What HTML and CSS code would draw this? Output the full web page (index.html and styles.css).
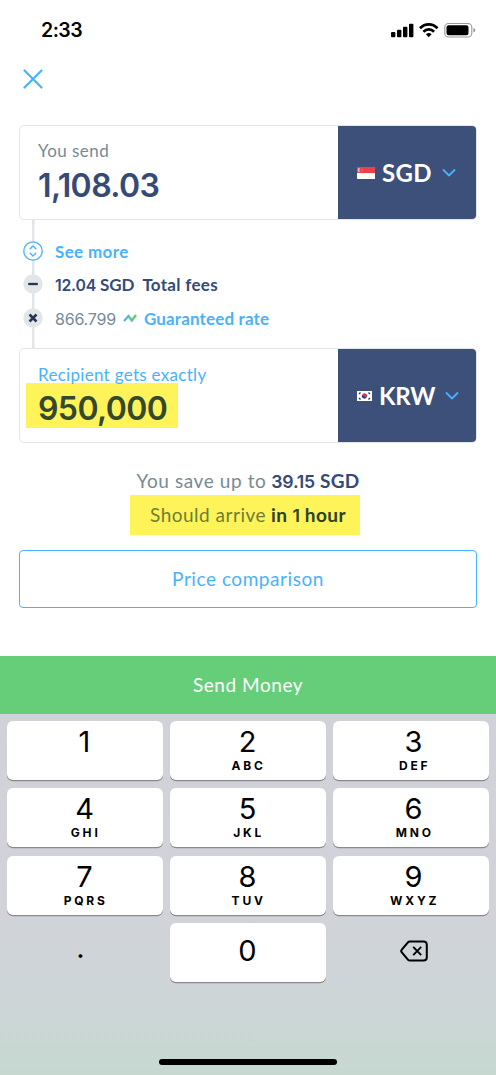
FILE: index.html
```html
<!DOCTYPE html>
<html lang="en">
<head>
<meta charset="utf-8">
<title>Send money</title>
<link rel="stylesheet" href="styles.css">
</head>
<body>
<main class="screen">
  <header class="status">
    <span class="time">2:33</span>
    <svg class="status-icons" width="86" height="18" viewBox="0 0 86 18">
      <rect x="1" y="10" width="4.4" height="5.2" rx="1"/>
      <rect x="7" y="7.7" width="4.4" height="7.5" rx="1"/>
      <rect x="13" y="4.7" width="4.4" height="10.5" rx="1"/>
      <rect x="19" y="1.7" width="4.4" height="13.5" rx="1"/>
      <g fill="none" stroke="#000" stroke-width="2.7">
        <path d="M30 6.2C35 1 42.500 1 47.500 6.200"/>
        <path d="M33.400 9.700C36.500 6.700 41 6.700 44.100 9.700"/>
      </g>
      <path d="M35.900 12.200Q38.750 9.900 41.600 12.200L38.750 15.200Z"/>
      <rect x="54.800" y="1.500" width="27" height="13.500" rx="3.800" fill="none" stroke="#999" stroke-width="1.100"/>
      <rect x="56.500" y="3.200" width="22" height="10.100" rx="2.200"/>
      <path d="M83.500 6v4.600q1.600-.6 1.600-2.300T83.500 6z" fill="#888"/>
    </svg>
  </header>
  <nav class="nav">
    <svg width="20" height="20" viewBox="0 0 20 20"><path d="M1.500 1.500l17 17M18.500 1.500l-17 17" fill="none" stroke="#48b3fb" stroke-width="2.200" stroke-linecap="round"/></svg>
  </nav>

  <section class="card">
    <div class="field">
      <div class="label send-label">You send</div>
      <div class="amount">1,108.03</div>
    </div>
    <div class="currency">
      <svg width="18" height="12" viewBox="0 0 18 12"><path fill="#fff" d="M0 0h18v12H0z"/><path fill="#ef4048" d="M0 0h18v6H0z"/><path d="M3.500 1.200a2 2 0 1 0 0 3.600a1.900 1.900 0 0 1 0-3.600z" fill="#ffb9bb"/><path d="M4.500 2h1v1h-1zm0 1.600h1v1h-1z" fill="#f79094"/></svg>
      <span class="code sgd">SGD</span>
      <svg width="14" height="9" viewBox="0 0 14 9"><path d="M1 1.500l6 6 6-6" fill="none" stroke="#48b3fb" stroke-width="1.800"/></svg>
    </div>
  </section>

  <section class="steps">
    <div class="step">
      <svg class="dot" width="20" height="20" viewBox="0 0 20 20"><circle cx="10" cy="10" r="9.200" fill="#fff" stroke="#48b3fb" stroke-width="1.300"/><path d="M6.700 8.200L10 5l3.300 3.200M6.700 11.800L10 15l3.300-3.200" fill="none" stroke="#48b3fb" stroke-width="1.300"/></svg>
      <span class="strong link more">See more</span>
    </div>
    <div class="step">
      <svg class="dot" width="20" height="20" viewBox="0 0 20 20"><circle cx="10" cy="10" r="9.700" fill="#e2e6e8"/><path d="M5.200 10h9.600" stroke="#253655" stroke-width="2.300"/></svg>
      <span class="strong navy fee"><span class="num">12.04</span> SGD</span>
      <span class="strong navy fees">Total fees</span>
    </div>
    <div class="step">
      <svg class="dot" width="20" height="20" viewBox="0 0 20 20"><circle cx="10" cy="10" r="9.700" fill="#e2e6e8"/><path d="M6.500 6.500l7 7M13.500 6.500l-7 7" stroke="#253655" stroke-width="2.500"/></svg>
      <span class="rate">866.799</span>
      <svg class="trend" width="14" height="10" viewBox="0 0 14 10"><defs><linearGradient id="g"><stop stop-color="#48b3fb"/><stop offset=".7" stop-color="#5bcd78"/></linearGradient></defs><path d="M1 8l4.500-5 3.300 4.500L13 2" fill="none" stroke="url(#g)" stroke-width="2.300"/></svg>
      <span class="strong link guaranteed">Guaranteed rate</span>
    </div>
  </section>

  <section class="card">
    <div class="field">
      <div class="label recipient">Recipient gets exactly</div>
      <div class="amount marked">950,000</div>
    </div>
    <div class="currency">
      <svg width="15" height="10" viewBox="0 0 15 10"><path fill="#fff" d="M0 0h15v10H0z"/><path d="M5.200 4A2.500 2.500 0 0 1 9.900 6Q8.500 6 7.500 5T5.200 4z" fill="#e22b43"/><path d="M5.100 4Q6.500 4 7.500 5T9.800 6A2.500 2.500 0 0 1 5.100 4z" fill="#1d4385"/><path d="M2 3l1.500-1.500M11.500 1.500L13 3M2 7l1.500 1.500M11.500 8.500L13 7" stroke="#333" stroke-width="1.300"/></svg>
      <span class="code krw">KRW</span>
      <svg width="14" height="9" viewBox="0 0 14 9"><path d="M1 1.500l6 6 6-6" fill="none" stroke="#48b3fb" stroke-width="1.800"/></svg>
    </div>
  </section>

  <section class="summary">
    <div class="save"><span class="save-text">You save up to</span> <b><span class="num">39.15</span> SGD</b></div>
    <div class="arrive"><span class="arrive-text">Should arrive</span> <b>in <span class="num">1</span> hour</b></div>
  </section>
  <button class="compare">Price comparison</button>
  <button class="send">Send Money</button>

  <section class="keyboard">
    <div class="keys">
      <div class="key"><span>1</span></div>
      <div class="key"><span>2</span><small>ABC</small></div>
      <div class="key last"><span>3</span><small>DEF</small></div>
      <div class="key"><span>4</span><small>GHI</small></div>
      <div class="key"><span>5</span><small>JKL</small></div>
      <div class="key last"><span>6</span><small>MNO</small></div>
      <div class="key"><span>7</span><small>PQRS</small></div>
      <div class="key"><span>8</span><small>TUV</small></div>
      <div class="key last"><span>9</span><small>WXYZ</small></div>
      <div class="key plain point"><span>.</span></div>
      <div class="key zero"><span>0</span></div>
      <div class="key plain"><svg width="28" height="22" viewBox="0 0 28 22"><path d="M9.800 1.500h13.700q3.300 0 3.300 3.300v12.400q0 3.300-3.300 3.300H9.800q-1 0-1.800-.8L1.800 12.300q-1.200-1.300 0-2.600L8 2.300q.8-.8 1.800-.8z" fill="none" stroke="#000" stroke-width="2"/><path d="M13.200 6.800l8 8.400M21.200 6.800l-8 8.400" stroke="#000" stroke-width="1.900"/></svg></div>
    </div>
    <div class="home"></div>
  </section>
</main>
</body>
</html>
```
FILE: styles.css
```css
* { box-sizing: border-box; }
body { margin: 0; background: #fff; font-family: Lato, "Liberation Sans", sans-serif; }
svg { display: block; flex: none; }
.screen { width: 496px; height: 1075px; overflow: hidden; display: flex; flex-direction: column; white-space: nowrap; }
.screen > * { flex: none; }
.status { height: 60px; padding: 0 20px 0 41px; display: flex; justify-content: space-between; align-items: center; }
.time { font: 600 19.500px/24px Inter, sans-serif; letter-spacing: -.5px; }
.status-icons { margin-top: 2px; }
.nav { height: 65px; padding: 9px 24px 0 23px; }
.card { height: 95px; margin: 0 19px; border: 1.500px solid #e2e6e8; border-radius: 5px; display: flex; overflow: hidden; }
.field { flex: 1; padding-left: 18px; }
.currency { width: 138px; background: #3d5079; display: flex; align-items: center; padding-left: 19px; }
.label { margin-top: 15px; height: 20px; font-size: 17px; line-height: 20px; letter-spacing: .45px; color: #768a96; }
.amount { font: 600 32px/45px Inter, sans-serif; letter-spacing: -.6px; color: #354a77; margin-top: 2px; }
.marked { width: 152px; height: 45px; line-height: 51px; margin: -2px 0 0 -12px; padding-left: 12px; background: #fff35a; color: #34482c; }
.recipient { margin-top: 16px; letter-spacing: .3px; color: #48b3fb; }
.code { color: #fff; font-size: 24px; font-weight: 700; line-height: 30px; margin: 0 10px 0 7px; }
.sgd { letter-spacing: .3px; }
.krw { letter-spacing: -.1px; }
.steps { height: 128px; margin: 0 23px; padding-top: 14px; background: linear-gradient(#e2e6e8, #e2e6e8) 9px 0 / 2.500px 100% no-repeat; }
.step { height: 33.500px; display: flex; align-items: center; font-size: 17px; line-height: 22px; }
.step > span { padding-top: 2px; }
.dot { margin-right: 12px; }
.strong { font-weight: 700; }
.link { color: #48b3fb; }
.navy { color: #354a77; }
.num { font-family: Inter, sans-serif; font-size: .93em; line-height: 1; font-weight: 600; letter-spacing: -.2px; }
.more { letter-spacing: .35px; }
.fee { letter-spacing: -.1px; }
.fees { margin-left: 8px; letter-spacing: .3px; }
.rate { font: 400 16px/22px Inter, sans-serif; letter-spacing: -.2px; color: #768a96; }
.trend { margin: 0 7px 0 7px; }
.guaranteed { letter-spacing: .15px; }
.summary { padding-top: 23px; height: 107px; display: flex; flex-direction: column; align-items: center; font-size: 19px; color: #768a96; }
.save { height: 29px; line-height: 29px; }
.save-text { letter-spacing: .6px; }
.save b { color: #354a77; letter-spacing: .3px; }
.arrive { width: 230px; height: 40px; line-height: 40px; margin-right: 6px; padding-left: 6px; text-align: center; background: #fff35a; color: #6d7d36; }
.arrive-text { letter-spacing: .5px; }
.arrive b { color: #2c4227; letter-spacing: .45px; }
.compare { height: 58px; margin: 0 19px; padding-bottom: 2px; border: 1.500px solid #48b3fb; border-radius: 4px; background: #fff; color: #48b3fb; font: 400 19px Lato, sans-serif; letter-spacing: .55px; }
.send { height: 58px; margin-top: 48px; padding-bottom: 3px; border: 0; background: #66ce79; color: #fff; font: 400 19px Lato, sans-serif; letter-spacing: .55px; }
.keyboard { flex: 1 !important; padding: 7px 7px 0; background: linear-gradient(#d1d2d9 0%, #d1d3d9 55%, #cdd5d7 80%, #c7d8d1 100%); }
.keys { display: grid; grid-template-columns: repeat(3, 156px); grid-auto-rows: 59px; gap: 8.300px 7px; }
.key { border-radius: 6px; background: #fff; box-shadow: 0 1.200px 0 #898a8d; display: flex; flex-direction: column; align-items: center; font-family: Inter, sans-serif; color: #000; padding-top: 4px; }
.key span { font-size: 29px; line-height: 34px; margin-right: 1px; }
.key small { font-size: 12px; line-height: 14px; font-weight: 700; letter-spacing: 2.800px; margin: 0 -1.400px 0 0; }
.last { padding-left: 6px; }
.plain { background: none; box-shadow: none; justify-content: center; padding: 0 0 3px 6px; }
.point { padding: 0 8px 9px 0; }
.zero { padding-top: 11px; }
.home { width: 178px; height: 6px; border-radius: 3px; background: #000; margin: 77px auto 0; }
```
